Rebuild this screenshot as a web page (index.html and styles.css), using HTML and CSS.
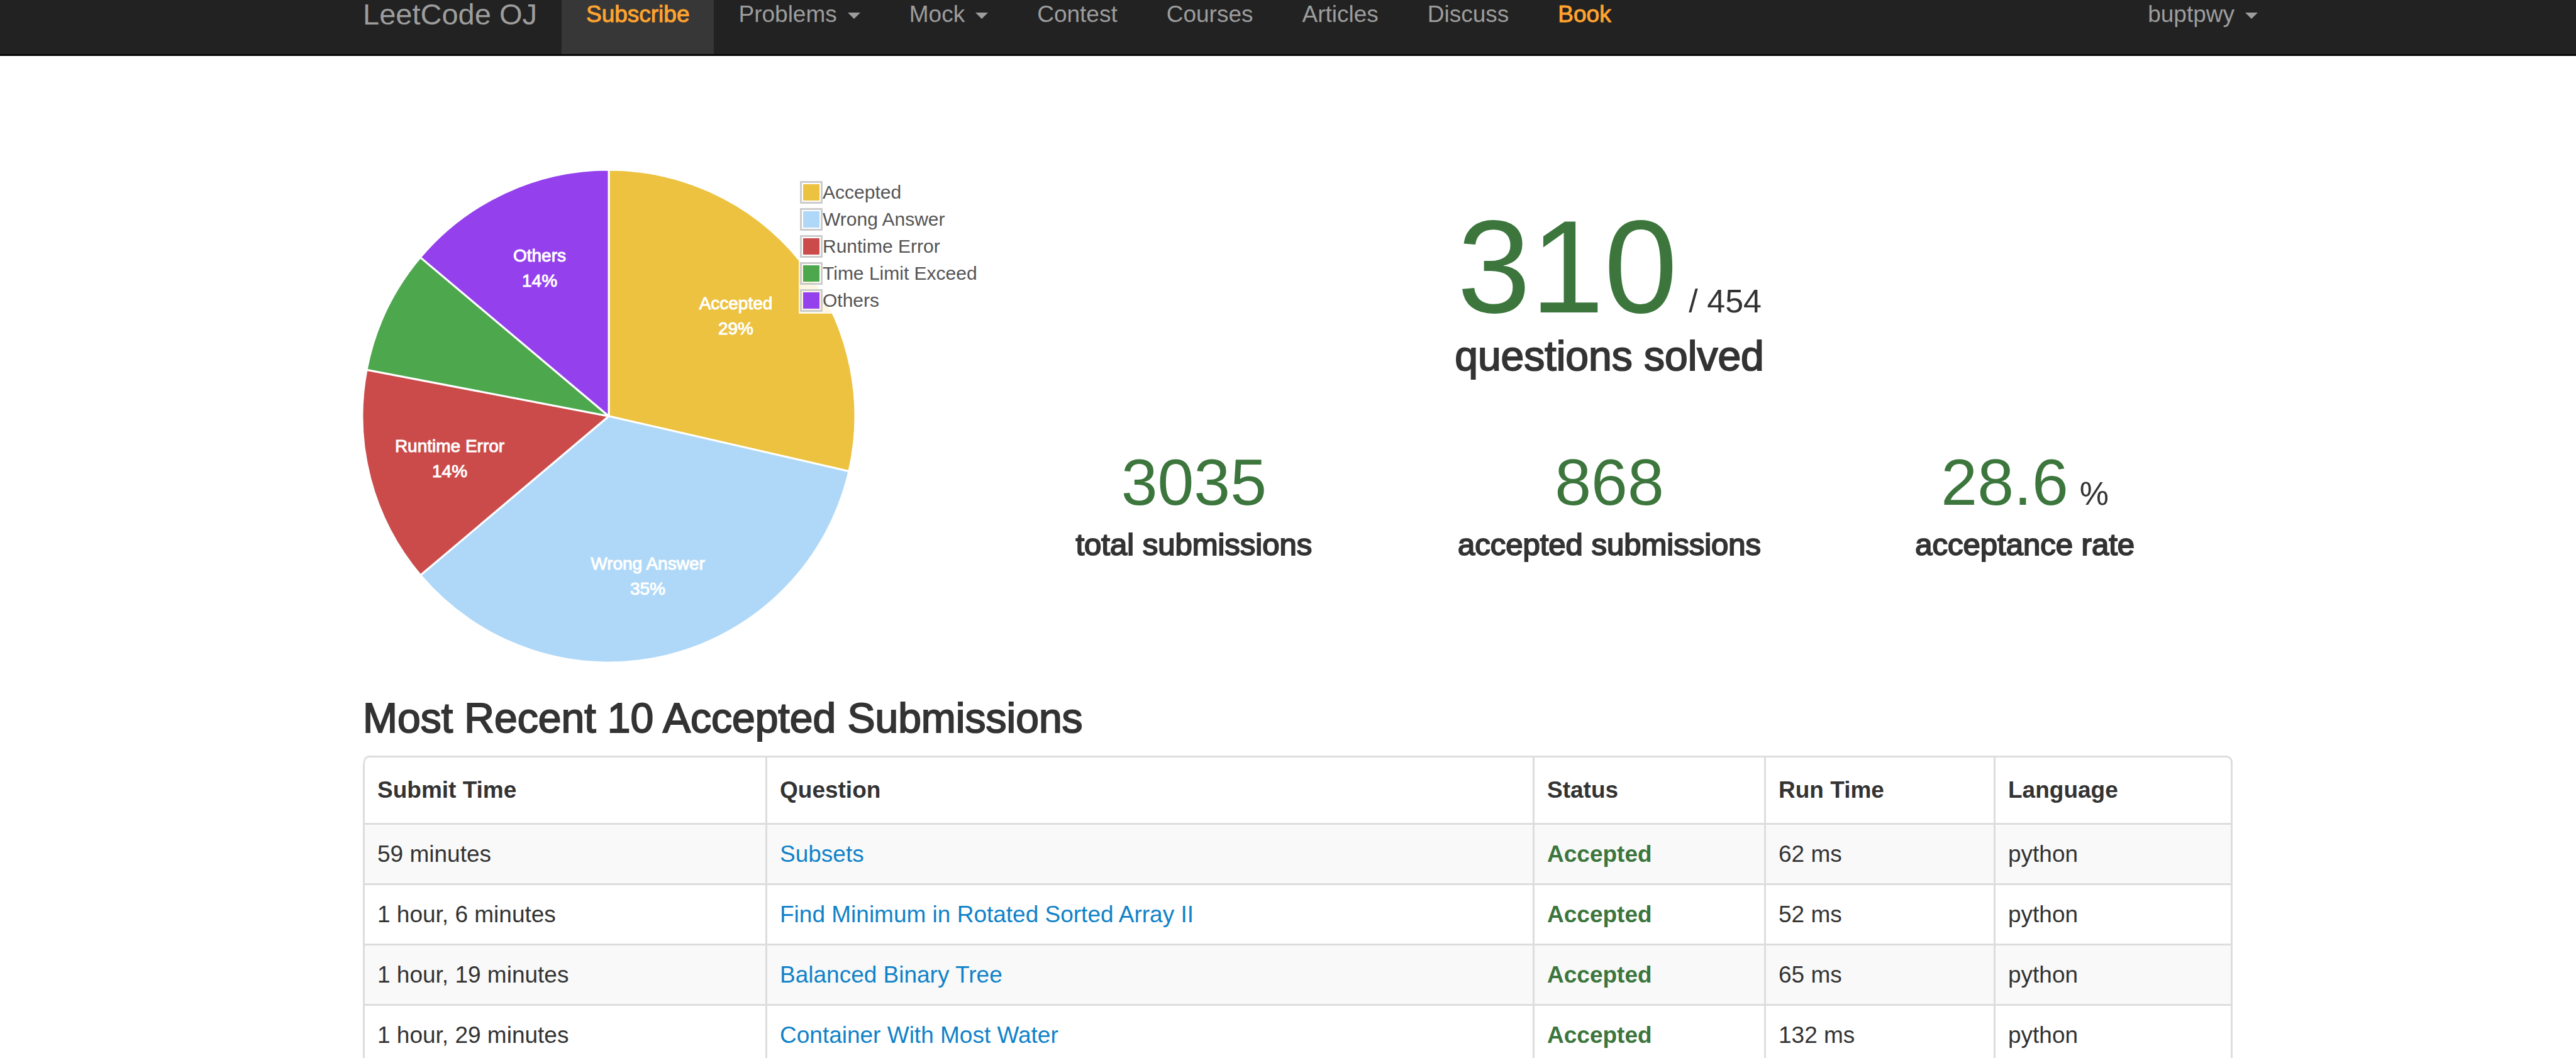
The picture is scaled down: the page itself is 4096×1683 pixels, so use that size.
FILE: index.html
```html
<!DOCTYPE html>
<html lang="en">
<head>
<meta charset="utf-8">
<title>LeetCode OJ - Progress</title>
<link rel="stylesheet" href="styles.css">
</head>
<body>
<header class="navbar">
  <a class="brand" href="#">LeetCode OJ</a>
  <nav class="nav">
    <a class="nav-item active highlight" href="#">Subscribe</a>
    <button class="nav-item" type="button">Problems<span class="caret"></span></button>
    <button class="nav-item" type="button">Mock<span class="caret"></span></button>
    <a class="nav-item" href="#">Contest</a>
    <a class="nav-item" href="#">Courses</a>
    <a class="nav-item" href="#">Articles</a>
    <a class="nav-item" href="#">Discuss</a>
    <a class="nav-item highlight" href="#">Book</a>
  </nav>
  <button class="nav-item user" type="button">buptpwy<span class="caret"></span></button>
</header>

<main class="content">
  <section class="overview">
    <div class="chart">
      <svg class="pie" viewBox="-391 -391 782 782" role="img" aria-label="Submission results">
        <g stroke="#fff" stroke-width="3" stroke-linejoin="round">
          <path fill="#ecc240" d="M0 0V-392A392 392 0 0 1 382 87.7Z"/>
          <path fill="#afd8f8" d="M0 0L382 87.7A392 392 0 0 1 -299.4 253Z"/>
          <path fill="#cb4b4b" d="M0 0L-299.4 253A392 392 0 0 1 -385 -73.8Z"/>
          <path fill="#4da74d" d="M0 0L-385 -73.8A392 392 0 0 1 -299.6 -252.7Z"/>
          <path fill="#9440ed" d="M0 0L-299.6 -252.7A392 392 0 0 1 0 -392Z"/>
        </g>
        <g class="pie-label">
          <text x="202" y="-170">Accepted</text>
          <text x="202" y="-130">29%</text>
          <text x="62" y="244">Wrong Answer</text>
          <text x="62" y="284">35%</text>
          <text x="-253" y="57">Runtime Error</text>
          <text x="-253" y="97">14%</text>
          <text x="-110" y="-246">Others</text>
          <text x="-110" y="-206">14%</text>
        </g>
      </svg>
      <ul class="legend">
        <li><span class="swatch accepted"></span>Accepted</li>
        <li><span class="swatch wrong"></span>Wrong Answer</li>
        <li><span class="swatch runtime"></span>Runtime Error</li>
        <li><span class="swatch timeout"></span>Time Limit Exceed</li>
        <li><span class="swatch others"></span>Others</li>
      </ul>
    </div>
    <div class="stats">
      <div class="stat primary">
        <p class="value">310<small>/ 454</small></p>
        <h2 class="label">questions solved</h2>
      </div>
      <div class="stat">
        <p class="value">3035</p>
        <h3 class="label">total submissions</h3>
      </div>
      <div class="stat">
        <p class="value">868</p>
        <h3 class="label">accepted submissions</h3>
      </div>
      <div class="stat">
        <p class="value">28.6<small>%</small></p>
        <h3 class="label">acceptance rate</h3>
      </div>
    </div>
  </section>

  <h2 class="title">Most Recent 10 Accepted Submissions</h2>
  <table class="submissions">
    <colgroup>
      <col class="col-time"><col><col class="col-status"><col class="col-runtime"><col class="col-language">
    </colgroup>
    <thead>
      <tr><th>Submit Time</th><th>Question</th><th>Status</th><th>Run Time</th><th>Language</th></tr>
    </thead>
    <tbody>
      <tr><td>59 minutes</td><td><a href="#">Subsets</a></td><td class="status">Accepted</td><td>62 ms</td><td>python</td></tr>
      <tr><td>1 hour, 6 minutes</td><td><a href="#">Find Minimum in Rotated Sorted Array II</a></td><td class="status">Accepted</td><td>52 ms</td><td>python</td></tr>
      <tr><td>1 hour, 19 minutes</td><td><a href="#">Balanced Binary Tree</a></td><td class="status">Accepted</td><td>65 ms</td><td>python</td></tr>
      <tr><td>1 hour, 29 minutes</td><td><a href="#">Container With Most Water</a></td><td class="status">Accepted</td><td>132 ms</td><td>python</td></tr>
    </tbody>
  </table>
</main>
</body>
</html>
```
FILE: styles.css
```css
* { box-sizing: border-box; }

body {
  margin: 0;
  background: #fff;
  color: #333;
  font-family: "Liberation Sans", Arial, sans-serif;
  font-size: 37px;
  line-height: 52px;
}

h2, h3, p, ul { margin: 0; padding: 0; }
a { color: #1082c8; text-decoration: none; }

/* Navigation bar */
.navbar {
  display: flex;
  align-items: stretch;
  padding: 0 467px 0 577px;
  background: #222;
  border-bottom: 3px solid #080808;
  white-space: nowrap;
}
.brand {
  padding-right: 39px;
  color: #9d9d9d;
  font-size: 47px;
  line-height: 46px;
}
.nav { display: flex; }
.nav-item {
  display: block;
  margin: 0;
  padding: 0 39px 41px;
  border: 0;
  background: none;
  color: #9d9d9d;
  font: inherit;
  line-height: 45px;
}
.active { background: #373737; }
.highlight {
  color: #ffa42e;
  -webkit-text-stroke: 1px #ffa42e;
}
.user { margin-left: auto; }
.caret {
  display: inline-block;
  margin-left: 17px;
  border: 10px solid transparent;
  border-top-color: #9d9d9d;
  border-bottom: 0;
  vertical-align: 5px;
}

/* Overview */
.content { padding: 182px 546px 0 577px; }
.overview {
  display: grid;
  grid-template-columns: 1fr 2fr;
  margin-bottom: 53px;
}
.chart { position: relative; }
.pie {
  display: block;
  width: 782px;
  height: 782px;
}
.pie-label {
  fill: #fff;
  stroke: #fff;
  stroke-width: 1px;
  font-size: 28px;
  text-anchor: middle;
}
.legend {
  position: absolute;
  top: 13px;
  left: 693px;
  padding-left: 2px;
  background: rgba(255, 255, 255, 0.85);
  color: #545454;
  font-size: 30px;
  line-height: 43px;
  list-style: none;
  white-space: nowrap;
}
.legend li { display: flex; align-items: center; }
.swatch {
  width: 36px;
  height: 36px;
  padding: 2px;
  border: 3px solid #ccc;
  background-clip: content-box;
}
.accepted { background-color: #edc240; }
.wrong { background-color: #afd8f8; }
.runtime { background-color: #cb4b4b; }
.timeout { background-color: #4da74d; }
.others { background-color: #9440ed; }

.stats {
  display: grid;
  grid-template-columns: repeat(3, 1fr);
  align-content: start;
  row-gap: 113px;
  padding-top: 49px;
  text-align: center;
}
.value {
  display: flex;
  justify-content: center;
  align-items: baseline;
  gap: 18px;
  color: #3c763d;
  font-size: 104px;
  line-height: 1;
}
.value small { color: #333; font-size: 52px; }
.label {
  margin-top: 20px;
  font-size: 49px;
  font-weight: 400;
  line-height: 54px;
  -webkit-text-stroke: 2px #333;
}
.primary { grid-column: 1 / -1; }
.primary .value { font-size: 210px; }
.primary .label { margin-top: 0; }

/* Section headings share the larger size */
.primary .label, .title {
  font-size: 66px;
  font-weight: 400;
  line-height: 72px;
  -webkit-text-stroke: 2px #333;
}

/* Recent submissions */
.title { margin-bottom: 24px; }
.submissions {
  width: 100%;
  table-layout: fixed;
  border: 3px solid #ddd;
  border-left: 0;
  border-radius: 10px;
  border-collapse: separate;
  border-spacing: 0;
  text-align: left;
}
.col-time { width: 640px; }
.col-status { width: 368px; }
.col-runtime { width: 365px; }
.col-language { width: 377px; }
.submissions th, .submissions td {
  padding: 21px 20px 20px;
  border-left: 3px solid #ddd;
}
.submissions td { border-top: 3px solid #ddd; }
.submissions th { padding: 26px 20px; }
.submissions th:first-child { border-top-left-radius: 10px; }
.submissions tbody tr:nth-child(odd) { background: #f9f9f9; }
.submissions .status { color: #3c763d; font-weight: 700; }
```
